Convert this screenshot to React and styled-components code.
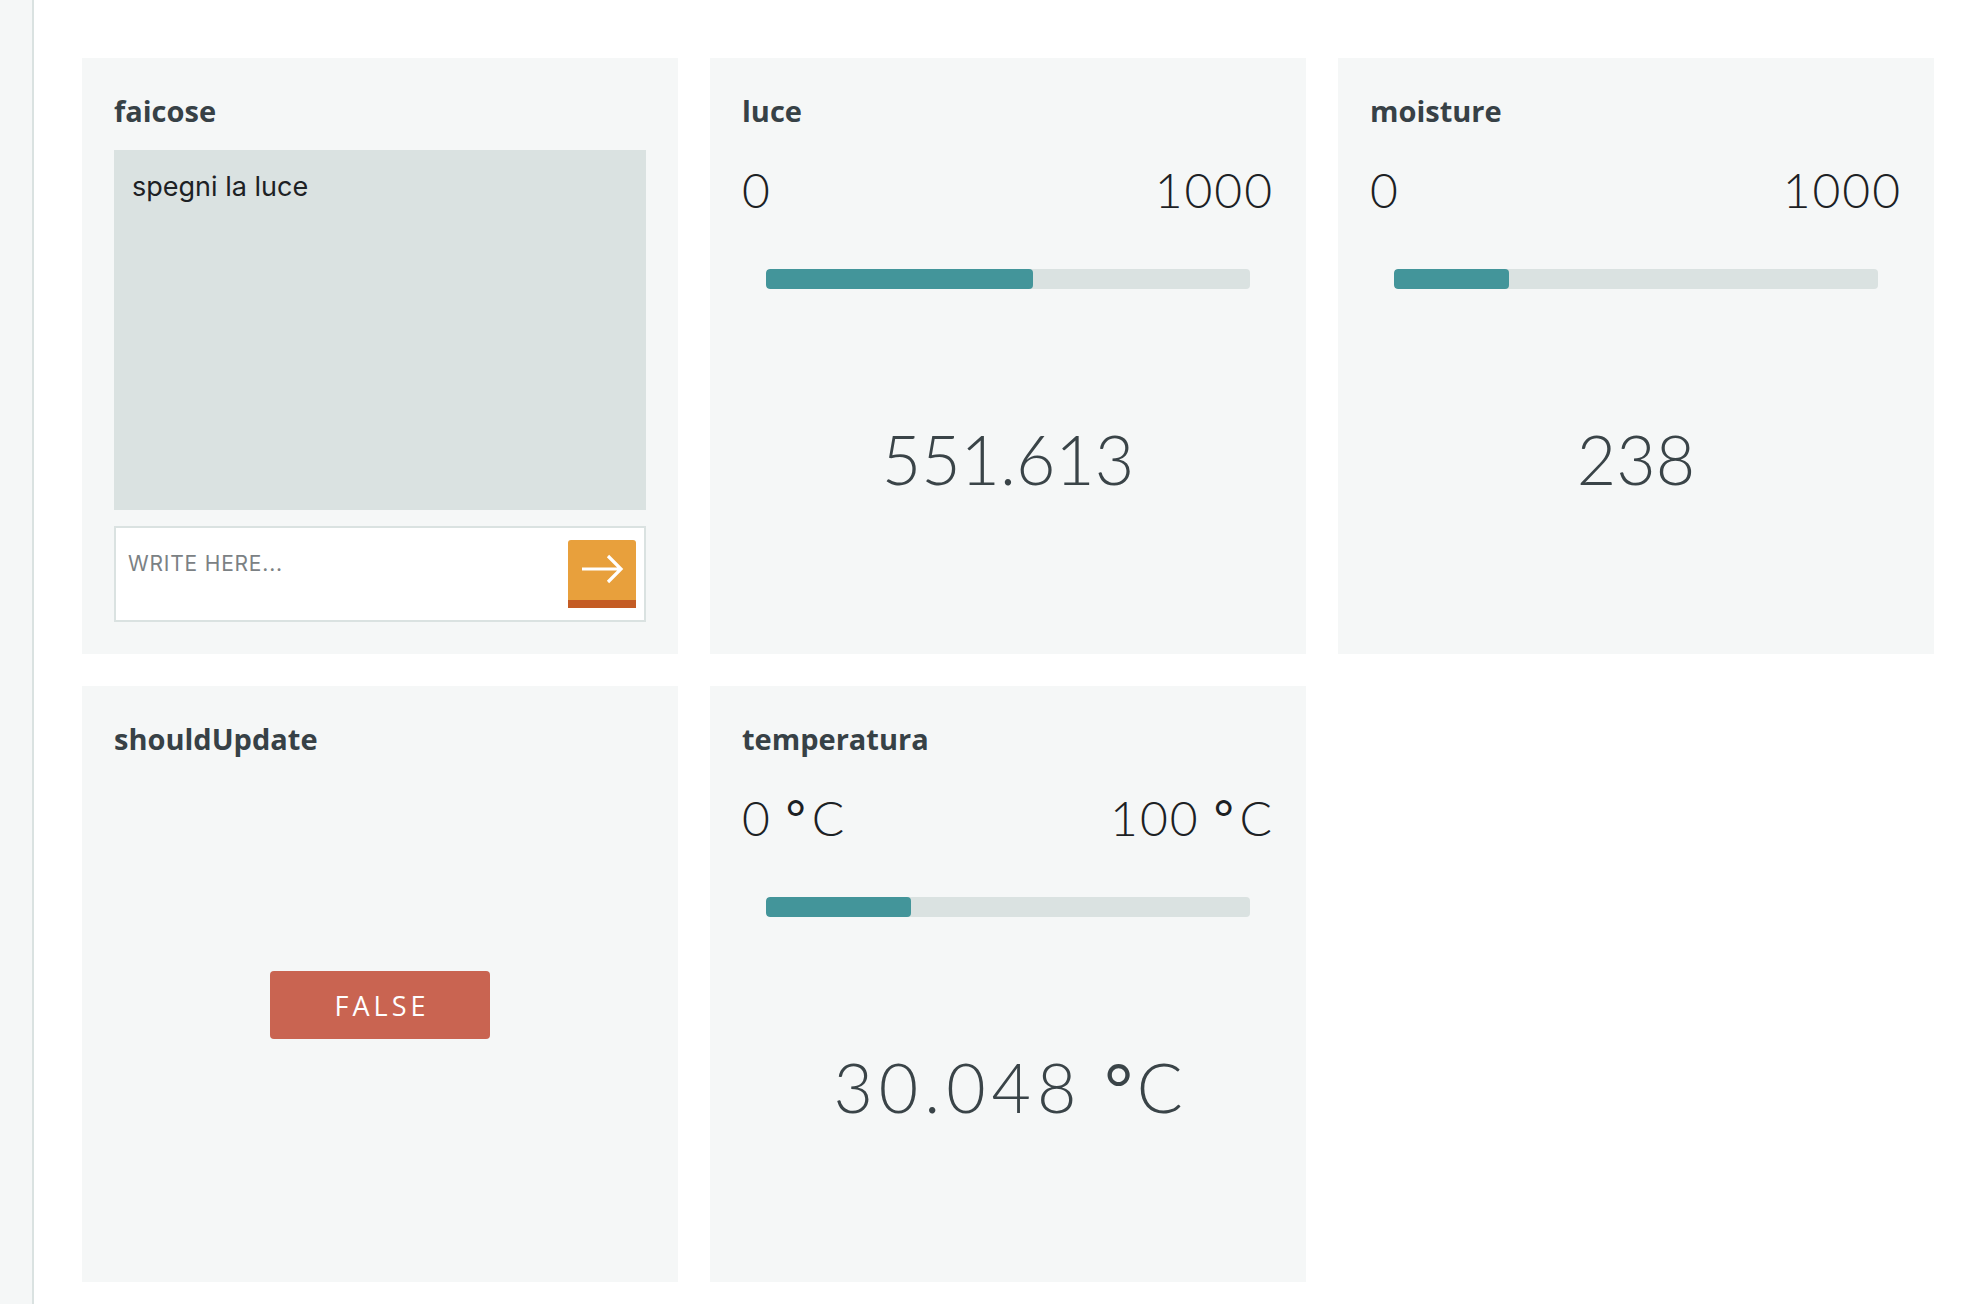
import React from "react";
import styled, { createGlobalStyle } from "styled-components";

const GlobalStyle = createGlobalStyle`
  html, body {
    margin: 0;
    padding: 0;
    background: #ffffff;
    font-family: "Open Sans", "Liberation Sans", sans-serif;
  }
  * { box-sizing: border-box; }
`;

const Layout = styled.div`
  display: flex;
  min-height: 100vh;
`;

const Sidebar = styled.aside`
  flex: 0 0 34px;
  background: #f5f7f7;
  border-right: 2px solid #dae2e1;
`;

const Main = styled.main`
  flex: 1;
  padding: 58px 40px 0 48px;
`;

const Grid = styled.div`
  display: grid;
  grid-template-columns: repeat(3, 596px);
  grid-auto-rows: 596px;
  gap: 32px;
`;

const Card = styled.section`
  background: #f5f7f7;
  padding: 32px;
  display: flex;
  flex-direction: column;
`;

const CardTitle = styled.h2`
  margin: 0;
  font-family: "Open Sans", "Liberation Sans", sans-serif;
  font-weight: 700;
  font-size: 29px;
  line-height: 42px;
  color: #374146;
`;

/* ---------- Messenger widget ---------- */
const MessageBox = styled.div`
  margin-top: 18px;
  height: 360px;
  background: #dae2e1;
  padding: 19px 18px 16px;
  font-family: "Inter", "Roboto", sans-serif;
  font-size: 27px;
  line-height: 36px;
  color: #1d2124;
`;

const InputRow = styled.form`
  margin-top: 16px;
  height: 96px;
  border: 2px solid #dae2e1;
  background: #ffffff;
  display: flex;
  align-items: flex-start;
  padding: 12px 8px 12px 12px;
`;

const TextInput = styled.input`
  flex: 1;
  height: 46px;
  border: none;
  outline: none;
  background: transparent;
  padding: 0;
  font-family: "Inter", "Roboto", sans-serif;
  font-size: 21px;
  letter-spacing: 0.8px;
  color: #374146;
  &::placeholder {
    color: #7b8184;
    text-transform: uppercase;
  }
`;

const SendButton = styled.button`
  flex: 0 0 68px;
  width: 68px;
  height: 68px;
  padding: 0;
  border: none;
  border-bottom: 8px solid #c45c24;
  border-radius: 3px 3px 0 0;
  background: #e8a03c;
  display: flex;
  align-items: center;
  justify-content: center;
  cursor: pointer;
`;

/* ---------- Gauge widget ---------- */
const RangeRow = styled.div`
  margin-top: 34px;
  display: flex;
  justify-content: space-between;
  font-family: "Lato", "Open Sans", sans-serif;
  font-weight: 300;
  font-size: 48px;
  line-height: 48px;
  letter-spacing: 2px;
  color: #1c2124;
`;

const Track = styled.div`
  margin: 55px 24px 0;
  height: 20px;
  border-radius: 4px;
  background: #dae2e1;
  overflow: hidden;
`;

const Fill = styled.div`
  height: 100%;
  border-radius: 4px;
  background: #43959a;
`;

const Value = styled.div`
  margin-top: 134px;
  text-align: center;
  font-family: "Lato", "Open Sans", sans-serif;
  font-weight: 300;
  font-size: 68px;
  line-height: 72px;
  letter-spacing: 0px;
  color: #3a4448;
  white-space: nowrap;
`;

const Number = styled.span`
  letter-spacing: ${(p) => p.$tracking || "inherit"};
`;

const Unit = styled.span`
  margin-left: ${(p) => (p.$big ? "22px" : "14px")};
`;

const Degree = styled.span`
  font-weight: 400;
  margin-right: 4px;
`;

/* ---------- Boolean widget ---------- */
const StatusArea = styled.div`
  flex: 1;
  display: flex;
  align-items: center;
  justify-content: center;
`;

const StatusButton = styled.button`
  width: 220px;
  height: 68px;
  border: none;
  border-radius: 4px;
  background: #c96451;
  color: #ffffff;
  font-family: "Open Sans", "Liberation Sans", sans-serif;
  font-size: 27px;
  font-weight: 400;
  letter-spacing: 4px;
  padding: 0 0 0 4px;
  cursor: pointer;
`;

const ArrowIcon = () => (
  <svg width="68" height="60" viewBox="0 0 68 60" aria-hidden="true">
    <path
      d="M14 29 H53 M40 16 L53 29 L40 42"
      fill="none"
      stroke="#ffffff"
      strokeWidth="3.2"
      strokeLinejoin="miter"
    />
  </svg>
);

const UnitLabel = ({ value, unit, big, tracking }) => (
  <span>
    <Number $tracking={tracking}>{value}</Number>
    {unit && (
      <Unit $big={big}>
        <Degree>°</Degree>C
      </Unit>
    )}
  </span>
);

const GaugeCard = ({ title, min, max, value, unit, tracking }) => {
  const pct = ((value - min) / (max - min)) * 100;
  return (
    <Card>
      <CardTitle>{title}</CardTitle>
      <RangeRow>
        <UnitLabel value={min} unit={unit} />
        <UnitLabel value={max} unit={unit} />
      </RangeRow>
      <Track>
        <Fill style={{ width: `${pct}%` }} />
      </Track>
      <Value>
        <UnitLabel value={value} unit={unit} big tracking={tracking} />
      </Value>
    </Card>
  );
};

export default function App() {
  return (
    <>
      <GlobalStyle />
      <Layout>
        <Sidebar />
        <Main>
          <Grid>
            <Card>
              <CardTitle>faicose</CardTitle>
              <MessageBox>spegni la luce</MessageBox>
              <InputRow onSubmit={(e) => e.preventDefault()}>
                <TextInput placeholder="Write here..." />
                <SendButton type="submit" aria-label="Send">
                  <ArrowIcon />
                </SendButton>
              </InputRow>
            </Card>
            <GaugeCard title="luce" min={0} max={1000} value={551.613} />
            <GaugeCard title="moisture" min={0} max={1000} value={238} />
            <Card>
              <CardTitle>shouldUpdate</CardTitle>
              <StatusArea>
                <StatusButton type="button">FALSE</StatusButton>
              </StatusArea>
            </Card>
            <GaugeCard
              title="temperatura"
              min={0}
              max={100}
              value={30.048}
              unit="C"
              tracking="6px"
            />
          </Grid>
        </Main>
      </Layout>
    </>
  );
}
